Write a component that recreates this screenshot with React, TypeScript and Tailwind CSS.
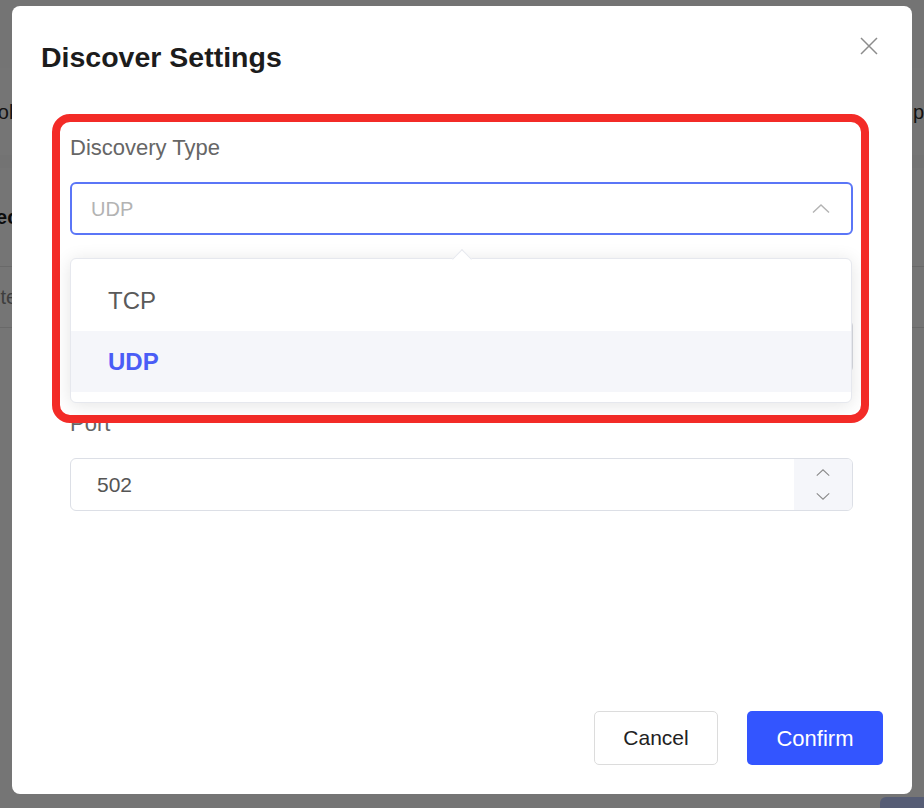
import { useState } from "react"

const options = ["TCP", "UDP"]

function ChevronUp({ className }: { className?: string }) {
    return (
        <svg viewBox="0 0 18 9" className={className} fill="none" stroke="currentColor" strokeWidth="1.4">
            <polyline points="1,8.5 9,1 17,8.5" />
        </svg>
    )
}

function ChevronDown({ className }: { className?: string }) {
    return (
        <svg viewBox="0 0 18 9" className={className} fill="none" stroke="currentColor" strokeWidth="1.4">
            <polyline points="1,0.5 9,8 17,0.5" />
        </svg>
    )
}

// page sitting behind the modal mask
function BackdropPage() {
    return (
        <div className="flex h-full flex-col bg-white">
            <div className="h-[68px] bg-[#fcfcfc]" />
            <div className="flex h-[87px] items-center justify-between text-[20px] text-[#2b2b2b]">
                <span className="-ml-[60px]">Protocol</span>
                <span>Setup</span>
            </div>
            <div className="h-[13px] bg-[#fafafa]" />
            <div className="flex h-[99px] items-center border-b border-[#e5e5e5] text-[20px] font-bold text-[#1a1a1a]">
                <span className="-ml-[34px]">Selected</span>
            </div>
            <div className="flex h-[61px] items-center border-b border-[#e5e5e5] text-[20px] text-[#888]">
                <span className="-ml-[24px]">Enter</span>
            </div>
            <div className="mt-auto flex justify-end">
                <div className="h-[11px] w-[44px] rounded-tl-md bg-[#bccaff]" />
            </div>
        </div>
    )
}

function DiscoverDialog() {
    const [type, setType] = useState("UDP")
    const [port, setPort] = useState(502)

    return (
        <div className="relative flex h-[788px] w-[900px] flex-col rounded-lg bg-white">
            {/* Header */}
            <div className="pl-[29px] pt-[33px]">
                <h2 className="text-[28.5px] font-semibold leading-[36px] text-[#1c1c1c]">Discover Settings</h2>
            </div>
            <button className="absolute right-[34px] top-[31px] text-[#8c8c8c]">
                <svg viewBox="0 0 18 18" className="h-[18px] w-[18px]" fill="none" stroke="currentColor" strokeWidth="1.5">
                    <path d="M1 1 17 17M17 1 1 17" />
                </svg>
            </button>

            {/* Form */}
            <div className="mt-[58px] flex flex-col gap-[36px] pl-[58px] pr-[59px]">
                <div>
                    <label className="block text-[22px] leading-[30px] text-[#666]">Discovery Type</label>
                    <div className="relative mt-[19px]">
                        <div className="flex h-[53px] items-center justify-between rounded-md border-2 border-[#5b76f7] pl-[19px] pr-[21px]">
                            <span className="text-[20px] text-[#b3b3b3]">{type}</span>
                            <ChevronUp className="h-[9px] w-[18px] text-[#b3b3b3]" />
                        </div>

                        {/* Options popover */}
                        <div className="absolute left-0 top-[76px] z-10 w-[782px] rounded-md border border-[#e6e8ee] bg-white pb-[10px] pt-[11px] shadow-[0_2px_18px_rgba(0,0,0,0.11)]">
                            <span className="absolute -top-[7px] left-[384px] h-[14px] w-[14px] rotate-45 border-l border-t border-[#e6e8ee] bg-white" />
                            {options.map((opt) => (
                                <div
                                    key={opt}
                                    onClick={() => setType(opt)}
                                    className={`relative flex h-[61px] items-center pl-[37px] text-[24px] ${
                                        opt === type ? "bg-[#f5f6fa] font-semibold text-[#4a5df6]" : "text-[#5a5a5a]"
                                    }`}
                                >
                                    {opt}
                                </div>
                            ))}
                        </div>
                    </div>
                </div>

                <div>
                    <label className="block text-[22px] leading-[30px] text-[#666]">Broadcast Address</label>
                    <div className="mt-[19px] flex h-[53px] items-center rounded-md border border-[#d9dbe1] pl-[26px] text-[21px] text-[#555]">
                        255.255.255.255
                    </div>
                </div>

                <div>
                    <label className="block text-[22px] leading-[30px] text-[#666]">Port</label>
                    <div className="mt-[19px] flex h-[53px] overflow-hidden rounded-md border border-[#dcdfe6]">
                        <div className="flex flex-1 items-center pl-[26px] text-[21px] text-[#555]">{port}</div>
                        <div className="flex w-[58px] flex-col items-center justify-center gap-[17px] bg-[#f5f6fa] text-[#8a8a8a]">
                            <button onClick={() => setPort(port + 1)}>
                                <ChevronUp className="block h-[7px] w-[14px]" />
                            </button>
                            <button onClick={() => setPort(port - 1)}>
                                <ChevronDown className="block h-[7px] w-[14px]" />
                            </button>
                        </div>
                    </div>
                </div>
            </div>

            {/* Footer */}
            <div className="mt-auto flex justify-end gap-[29px] pb-[29px] pr-[29px]">
                <button className="h-[54px] w-[124px] rounded-[5px] border border-[#dcdcdc] bg-white text-[21px] text-[#222]">
                    Cancel
                </button>
                <button className="h-[54px] w-[136px] rounded-[5px] bg-[#3355ff] text-[22px] text-white">
                    Confirm
                </button>
            </div>
        </div>
    )
}

export default function App() {
    return (
        <div className="relative h-[808px] w-[924px] overflow-hidden font-['Liberation_Sans',Arial,sans-serif]">
            <BackdropPage />

            {/* Mask + modal */}
            <div className="absolute inset-0 flex justify-center bg-black/[0.54] pt-[6px]">
                <DiscoverDialog />
            </div>

            {/* Highlight frame around the type selector */}
            <div className="pointer-events-none absolute left-[52px] top-[114px] h-[309px] w-[817px] rounded-[18px] border-[8px] border-[#f32b27]" />
        </div>
    )
}
